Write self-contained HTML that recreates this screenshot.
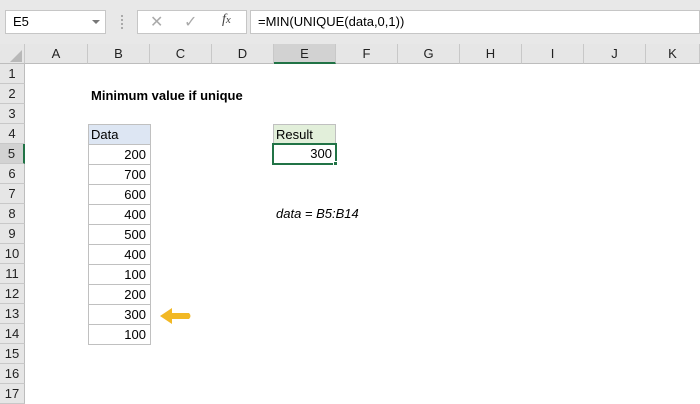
<!DOCTYPE html><html><head><style>
body{margin:0;width:700px;height:400px;overflow:hidden;background:#fff;font-family:"Liberation Sans",Calibri,sans-serif;position:relative}
div{position:absolute;box-sizing:border-box}
.top{left:0;top:0;width:700px;height:44px;background:#e8e8e8}
.ch{top:44px;height:20px;background:#e6e6e6;border-right:1px solid #c8c8c8;border-bottom:1px solid #bdbdbd;font-size:13px;text-align:center;line-height:20px;color:#222}
.rh{left:0;width:25px;height:20px;background:#e6e6e6;border-bottom:1px solid #c8c8c8;border-right:1px solid #bdbdbd;font-size:13px;text-align:center;line-height:20px;color:#222}
.c{left:88px;width:63px;height:21px;border:1px solid #c0c0c0;font-size:13px;text-align:right;padding-right:4px;line-height:20px;color:#000}
</style></head><body>
<div class="top"></div>
<div style="left:5px;top:10px;width:101px;height:24px;background:#fff;border:1px solid #c6c6c6;font-size:13px;line-height:22px;padding-left:7px">E5</div>
<div style="left:92px;top:20px;width:0;height:0;border-left:4px solid transparent;border-right:4px solid transparent;border-top:4px solid #777"></div>
<div style="left:121px;top:15px;width:2px;height:14px;border-left:2px dotted #aaa"></div>
<div style="left:137px;top:10px;width:110px;height:24px;background:#fff;border:1px solid #c6c6c6"></div>
<div style="left:150px;top:12px;font-size:16px;color:#aaa">✕</div>
<div style="left:184px;top:12px;font-size:16px;color:#aaa">✓</div>
<div style="left:222px;top:12px;font-size:14px;font-style:italic;font-family:'Liberation Serif',serif;color:#444">f<span style="font-size:11px">x</span></div>
<div style="left:250px;top:10px;width:450px;height:24px;background:#fff;border:1px solid #c6c6c6;font-size:13px;line-height:22px;padding-left:7px">=MIN(UNIQUE(data,0,1))</div>
<div class="ch" style="left:0;width:25px"></div>
<div style="left:10px;top:50px;width:0;height:0;border-left:12px solid transparent;border-bottom:12px solid #b8b8b8"></div>
<div class="ch" style="left:25px;width:63px">A</div>
<div class="ch" style="left:88px;width:62px">B</div>
<div class="ch" style="left:150px;width:62px">C</div>
<div class="ch" style="left:212px;width:62px">D</div>
<div class="ch" style="left:274px;width:62px;background:#d2d2d2;border-bottom:2px solid #217346">E</div>
<div class="ch" style="left:336px;width:62px">F</div>
<div class="ch" style="left:398px;width:62px">G</div>
<div class="ch" style="left:460px;width:62px">H</div>
<div class="ch" style="left:522px;width:62px">I</div>
<div class="ch" style="left:584px;width:62px">J</div>
<div class="ch" style="left:646px;width:54px">K</div>
<div class="rh" style="top:64px">1</div><div class="rh" style="top:84px">2</div><div class="rh" style="top:104px">3</div><div class="rh" style="top:124px">4</div>
<div class="rh" style="top:144px;background:#d2d2d2;border-right:2px solid #217346">5</div>
<div class="rh" style="top:164px">6</div><div class="rh" style="top:184px">7</div><div class="rh" style="top:204px">8</div><div class="rh" style="top:224px">9</div><div class="rh" style="top:244px">10</div><div class="rh" style="top:264px">11</div><div class="rh" style="top:284px">12</div><div class="rh" style="top:304px">13</div><div class="rh" style="top:324px">14</div><div class="rh" style="top:344px">15</div><div class="rh" style="top:364px">16</div><div class="rh" style="top:384px">17</div>
<div style="left:91px;top:86px;font-size:13px;font-weight:bold;line-height:20px">Minimum value if unique</div>
<div class="c" style="top:124px;background:#dde6f3;text-align:left;padding-left:2px">Data</div>
<div class="c" style="top:144px">200</div><div class="c" style="top:164px">700</div><div class="c" style="top:184px">600</div><div class="c" style="top:204px">400</div><div class="c" style="top:224px">500</div><div class="c" style="top:244px">400</div><div class="c" style="top:264px">100</div><div class="c" style="top:284px">200</div><div class="c" style="top:304px">300</div><div class="c" style="top:324px">100</div>
<div style="left:273px;top:124px;width:63px;height:21px;border:1px solid #c0c0c0;background:#e2efda;font-size:13px;line-height:20px;padding-left:2px">Result</div>
<div style="left:272px;top:143px;width:65px;height:22px;border:2px solid #217346;font-size:13px;line-height:18px;text-align:right;padding-right:3px">300</div>
<div style="left:333px;top:161px;width:5px;height:5px;background:#217346;border:1px solid #fff"></div>
<div style="left:276px;top:204px;font-size:13px;font-style:italic;line-height:20px">data = B5:B14</div>
<svg style="position:absolute;left:158px;top:305px" width="36" height="22"><path d="M2 11 L14 3 L14 8 L31 8 Q34 11 31 14 L14 14 L14 19 Z" fill="#f2b824"/></svg>
</body></html>
